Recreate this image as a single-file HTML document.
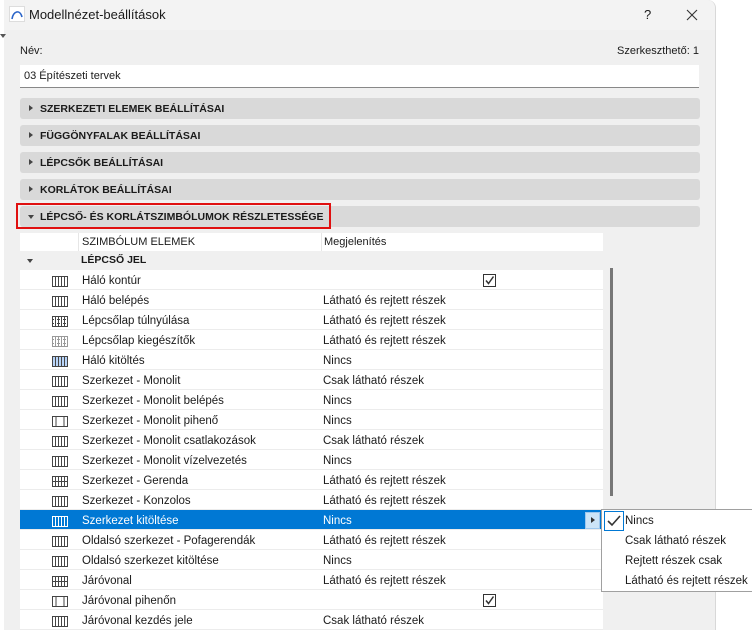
<!DOCTYPE html>
<html><head><meta charset="utf-8"><style>
*{margin:0;padding:0;box-sizing:border-box}
body{width:752px;height:630px;background:#fff;font-family:"Liberation Sans",sans-serif;font-size:11.5px;color:#1a1a1a;position:relative;overflow:hidden}
.a{position:absolute;white-space:nowrap}
#win{position:absolute;left:4px;top:0;width:712px;height:630px;background:#f0f0f0;border-radius:0 8px 0 0;border-right:1px solid #d8d8d8}
#title{position:absolute;left:4px;top:0;width:711px;height:30px;background:#f3f3f3;border-radius:0 8px 0 0}
.bar{position:absolute;left:20px;width:680px;height:21px;background:#d9d9d9;border-radius:3px;font-weight:bold;font-size:10.5px;line-height:22px;padding-left:20px}
.bar:before{content:"";position:absolute;left:9px;top:7px;border-left:4px solid #444;border-top:3.5px solid transparent;border-bottom:3.5px solid transparent}
.bar.open:before{left:8px;top:9px;border-top:4px solid #444;border-left:3.5px solid transparent;border-right:3.5px solid transparent;border-bottom:0}
.row{position:absolute;left:20px;width:583px;height:20px;background:#fff;border-bottom:1px solid #ececec;line-height:23px}
.row .c1{position:absolute;left:62px}
.row .c2{position:absolute;left:303px}
.row svg{position:absolute;left:32px;top:6px}
.sel{background:#0078d4;color:#fff}
.cb{position:absolute;left:463px;top:4px;width:13px;height:13px;border:1px solid #333;background:#fff}
.menu div{height:20px;line-height:21px;padding-left:23px}
</style></head><body>
<div id="win"></div>
<div id="title"></div>
<svg class="a" style="left:9px;top:6px" width="16" height="16" viewBox="0 0 16 16"><rect x=".5" y=".5" width="15" height="15" fill="#fff" stroke="#ddd"/><path d="M3 13 C4 5 11 3 13 11" fill="none" stroke="#2a64c8" stroke-width="1.6"/></svg>
<div class="a" style="left:29px;top:7px;font-size:13px">Modellnézet-beállítások</div>
<div class="a" style="left:644px;top:7px;font-size:13px">?</div>
<svg class="a" style="left:686px;top:9px" width="12" height="12"><path d="M1 1L11 11M11 1L1 11" stroke="#333" stroke-width="1.1"/></svg>
<div class="a" style="left:0;top:34px;border-top:4px solid #555;border-left:3px solid transparent;border-right:3px solid transparent"></div>
<div class="a" style="left:20px;top:45px;font-size:11px">Név:</div>
<div class="a" style="left:617px;top:45px;font-size:11px">Szerkeszthető: 1</div>
<div class="a" style="left:20px;top:65px;width:679px;height:23px;background:#fff;border-bottom:1px solid #888;padding-left:4px;line-height:22px;font-size:11px">03 Építészeti tervek</div>
<div class="bar" style="top:98px">SZERKEZETI ELEMEK BEÁLLÍTÁSAI</div>
<div class="bar" style="top:125px">FÜGGÖNYFALAK BEÁLLÍTÁSAI</div>
<div class="bar" style="top:152px">LÉPCSŐK BEÁLLÍTÁSAI</div>
<div class="bar" style="top:179px">KORLÁTOK BEÁLLÍTÁSAI</div>
<div class="bar open" style="top:206px">LÉPCSŐ- ÉS KORLÁTSZIMBÓLUMOK RÉSZLETESSÉGE</div>
<div class="a" style="left:16px;top:203px;width:315px;height:26px;border:2px solid #e01010"></div>
<div class="a" style="left:20px;top:233px;width:583px;height:18px;background:#fff;line-height:18px;font-size:11px">
<span class="a" style="left:58px;top:0;width:1px;height:18px;background:#e6e6e6"></span>
<span class="a" style="left:62px">SZIMBÓLUM ELEMEK</span>
<span class="a" style="left:301px;top:0;width:1px;height:18px;background:#e6e6e6"></span>
<span class="a" style="left:304px">Megjelenítés</span></div>
<div class="a" style="left:20px;top:251px;width:583px;height:19px;background:#f0f0f0;line-height:19px;font-weight:bold;font-size:10.5px"><span class="a" style="left:7px;top:8px;border-top:4px solid #444;border-left:3.5px solid transparent;border-right:3.5px solid transparent"></span><span class="a" style="left:61px">LÉPCSŐ JEL</span></div>
<div id="rows"></div>
<div class="a" style="left:610px;top:268px;width:3px;height:228px;background:#777"></div>
<div class="a" style="left:585px;top:512px;width:15px;height:17px;background:#cce4f7;border:1px solid #9cc7ee"><span class="a" style="left:5px;top:4px;border-left:4px solid #333;border-top:3.5px solid transparent;border-bottom:3.5px solid transparent"></span></div>
<div class="a menu" style="left:601px;top:509px;width:152px;height:83px;background:#fff;border:1px solid #a0a0a0;padding-top:1px">
<div style="position:relative">Nincs<span class="a" style="left:2px;top:0;width:20px;height:20px;border:1px solid #0078d4"></span><svg class="a" style="left:5px;top:4px" width="14" height="12"><path d="M1 6L5 10L13 1" fill="none" stroke="#333" stroke-width="1.6"/></svg></div>
<div>Csak látható részek</div><div>Rejtett részek csak</div><div>Látható és rejtett részek</div></div>
<script>
var R=[["Háló kontúr","#cb",0],["Háló belépés","Látható és rejtett részek",1],["Lépcsőlap túlnyúlása","Látható és rejtett részek",2],["Lépcsőlap kiegészítők","Látható és rejtett részek",3],["Háló kitöltés","Nincs",4],["Szerkezet - Monolit","Csak látható részek",1],["Szerkezet - Monolit belépés","Nincs",1],["Szerkezet - Monolit pihenő","Nincs",5],["Szerkezet - Monolit csatlakozások","Csak látható részek",0],["Szerkezet - Monolit vízelvezetés","Nincs",0],["Szerkezet - Gerenda","Látható és rejtett részek",6],["Szerkezet - Konzolos","Látható és rejtett részek",1],["Szerkezet kitöltése","Nincs",1],["Oldalsó szerkezet - Pofagerendák","Látható és rejtett részek",0],["Oldalsó szerkezet kitöltése","Nincs",0],["Járóvonal","Látható és rejtett részek",6],["Járóvonal pihenőn","#cb",5],["Járóvonal kezdés jele","Csak látható részek",0]];
var h="";
R.forEach(function(r,i){var y=270+i*20,s=i==12;
var st=s?"#fff":(r[2]==3?"#999":"#444"),fill=r[2]==4?"#b8d4f8":(s?"#0078d4":"#fff");
var ic='<svg width="16" height="11"><rect x=".5" y=".5" width="15" height="10" fill="'+fill+'" stroke="'+st+'"/>';
var xs=r[2]==5?[4,12]:[3.5,6.5,9.5,12.5];
xs.forEach(function(x){ic+='<path d="M'+x+' 1V10" stroke="'+st+'"/>'});
if(r[2]==2||r[2]==3)ic+='<path d="M1 3.5H15M1 7.5H15" stroke="'+st+'" stroke-dasharray="1 1"/>';
if(r[2]==6)ic+='<path d="M0 5.5H16" stroke="'+st+'"/>';
ic+='</svg>';
var c2=r[1]=="#cb"?'<span class="cb"><svg width="11" height="11" style="position:absolute;left:0;top:0"><path d="M2 5.5L4.5 8.5L9.5 1.5" fill="none" stroke="#333" stroke-width="1.5"/></svg></span>':'<span class="c2">'+r[1]+'</span>';
h+='<div class="row'+(s?' sel':'')+'" style="top:'+y+'px">'+ic+'<span class="c1">'+r[0]+'</span>'+c2+'</div>';});
document.getElementById("rows").innerHTML=h;
</script>
</body></html>
